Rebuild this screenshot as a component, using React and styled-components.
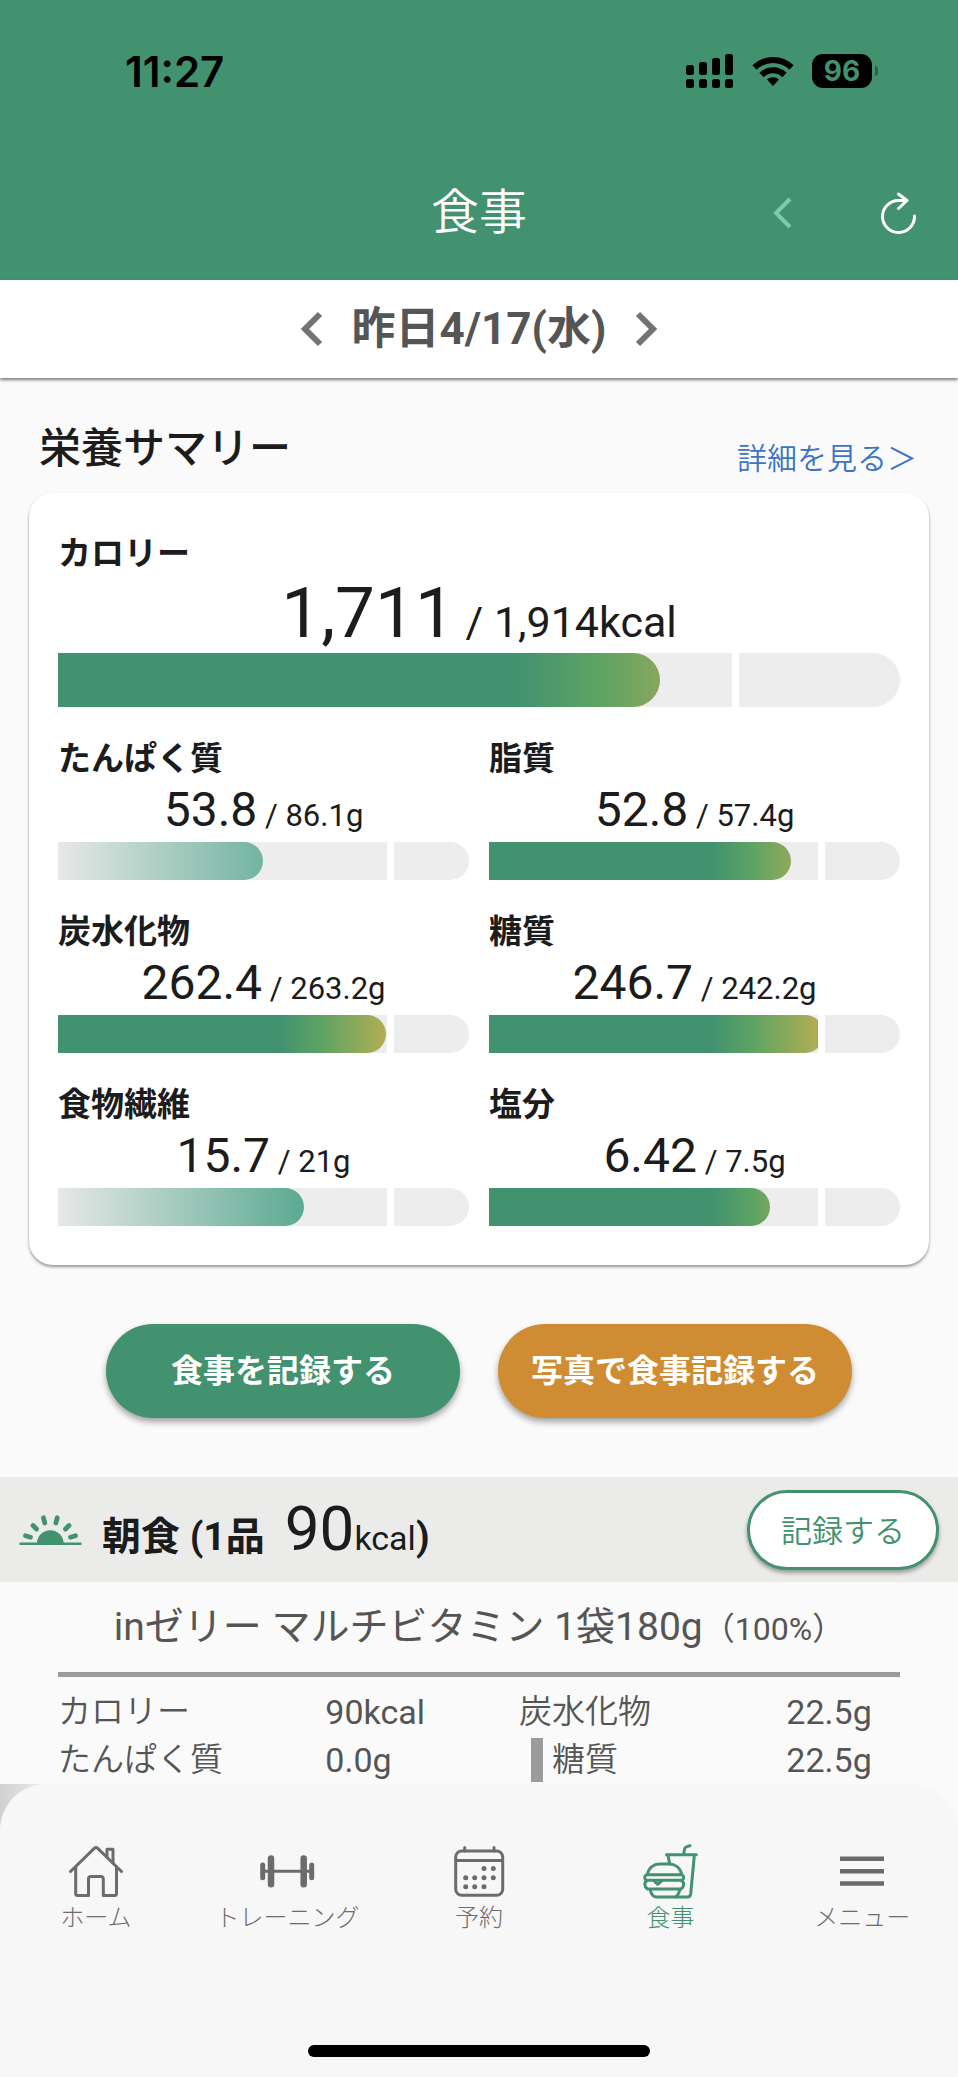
import React from "react"
import styled, { createGlobalStyle } from "styled-components"

const GREEN = "#42926f"
const INK = "#1c1c1c"

const nutrients = [
  { name: "たんぱく質", value: 53.8, goal: 86.1 },
  { name: "脂質", value: 52.8, goal: 57.4 },
  { name: "炭水化物", value: 262.4, goal: 263.2 },
  { name: "糖質", value: 246.7, goal: 242.2 },
  { name: "食物繊維", value: 15.7, goal: 21 },
  { name: "塩分", value: 6.42, goal: 7.5 },
]

const tabs = [
  { label: "ホーム", icon: HomeIcon },
  { label: "トレーニング", icon: DumbbellIcon },
  { label: "予約", icon: CalendarIcon },
  { label: "食事", icon: MealIcon, active: true },
  { label: "メニュー", icon: MenuIcon },
]

function Meter({ name, value, goal, large }) {
  const percent = (value / goal) * 100
  return (
    <Track
      $large={large}
      role="meter"
      aria-label={name}
      aria-valuemin={0}
      aria-valuemax={goal}
      aria-valuenow={value}
    >
      <Goal>
        <Fill $low={percent < 80} style={{ width: `${percent}%` }} />
      </Goal>
      <Over />
    </Track>
  )
}

function App() {
  return (
    <Page>
      <GlobalStyle />
      <Header>
        <StatusBar>
          <Clock>11:27</Clock>
          <StatusIcons>
            <SignalIcon />
            <WifiIcon />
            <Battery>96</Battery>
          </StatusIcons>
        </StatusBar>
        <AppBar>
          <AppTitle>食事</AppTitle>
          <AppActions>
            <IconButton aria-label="戻る">
              <svg width="20" height="34" viewBox="0 0 20 34" fill="none">
                <path d="M17 3L3 17l14 14" stroke="#7bcaa8" strokeWidth="4" />
              </svg>
            </IconButton>
            <IconButton aria-label="更新">
              <RefreshIcon />
            </IconButton>
          </AppActions>
        </AppBar>
      </Header>

      <DateBar>
        <IconButton aria-label="前の日">
          <svg width="24" height="38" viewBox="0 0 24 38" fill="none">
            <path d="M20 4L5 19l15 15" stroke="#737373" strokeWidth="6" />
          </svg>
        </IconButton>
        <DateText>昨日4/17(水)</DateText>
        <IconButton aria-label="次の日">
          <svg width="24" height="38" viewBox="0 0 24 38" fill="none">
            <path d="M4 4l15 15L4 34" stroke="#737373" strokeWidth="6" />
          </svg>
        </IconButton>
      </DateBar>

      <main>
        <SectionHead>
          <SectionTitle>栄養サマリー</SectionTitle>
          <DetailLink href="#detail">詳細を見る＞</DetailLink>
        </SectionHead>

        <Card>
          <Label>カロリー</Label>
          <Amount $large>
            1,711<Target $large> / 1,914kcal</Target>
          </Amount>
          <Meter name="カロリー" value={1711} goal={1914} large />
          <NutrientGrid>
            {nutrients.map(n => (
              <div key={n.name}>
                <Label>{n.name}</Label>
                <Amount>
                  {n.value}
                  <Target> / {n.goal}g</Target>
                </Amount>
                <Meter {...n} />
              </div>
            ))}
          </NutrientGrid>
        </Card>

        <Actions>
          <ActionButton $color={GREEN}>食事を記録する</ActionButton>
          <ActionButton $color="#cf8c33">写真で食事記録する</ActionButton>
        </Actions>

        <MealHead>
          <SunriseIcon />
          <MealTitle>
            朝食 (1品<MealKcal>90</MealKcal>
            <MealUnit>kcal</MealUnit>)
          </MealTitle>
          <RecordButton>記録する</RecordButton>
        </MealHead>

        <Food>
          <FoodName>
            inゼリー マルチビタミン 1袋180g<Portion>（100%）</Portion>
          </FoodName>
          <FoodTable>
            <tbody>
              <tr>
                <NameCell>カロリー</NameCell>
                <ValueCell $wide>90kcal</ValueCell>
                <NameCell>炭水化物</NameCell>
                <ValueCell>22.5g</ValueCell>
              </tr>
              <tr>
                <NameCell>たんぱく質</NameCell>
                <ValueCell $wide>0.0g</ValueCell>
                <NameCell>
                  <SubName>糖質</SubName>
                </NameCell>
                <ValueCell>22.5g</ValueCell>
              </tr>
            </tbody>
          </FoodTable>
        </Food>
      </main>

      <TabBack>
        <TabBar>
          <Tabs>
            {tabs.map(({ label, icon: Icon, active }) => (
              <Tab
                key={label}
                href={`#${label}`}
                $active={active}
                aria-current={active ? "page" : undefined}
              >
                <Icon />
                <span>{label}</span>
              </Tab>
            ))}
          </Tabs>
          <HomeIndicator />
        </TabBar>
      </TabBack>
    </Page>
  )
}

export default App

function SignalIcon() {
  const bars = [
    { x: 0, y: 11, h: 10 },
    { x: 13, y: 8, h: 13 },
    { x: 26, y: 4, h: 17 },
    { x: 39, y: 0, h: 21 },
  ]
  return (
    <svg width="48" height="34" viewBox="0 0 48 34">
      {bars.map(b => (
        <g key={b.x}>
          <rect x={b.x} y={b.y} width="8" height={b.h} rx="2.500" />
          <rect x={b.x} y="25" width="8" height="9" rx="2.500" />
        </g>
      ))}
    </svg>
  )
}

function WifiIcon() {
  return (
    <svg width="42" height="30" viewBox="0 0 42 30">
      <g fill="none" stroke="#000" strokeWidth="6">
        <path d="M2.500 11.500a26.500 26.500 0 0 1 37 0" />
        <path d="M9.500 19a16.500 16.500 0 0 1 23 0" />
      </g>
      <path d="M21 30l-6-6.500a9 9 0 0 1 12 0z" />
    </svg>
  )
}

function RefreshIcon() {
  return (
    <svg width="36" height="42" viewBox="0 0 36 42" fill="none">
      <g stroke="#fff" strokeWidth="3" strokeLinecap="round">
        <path d="M33.500 24A16 16 0 1 1 17.500 8.500H25.500" />
        <path d="M17.500 2l8.500 6.500-8.500 8" strokeLinejoin="round" />
      </g>
    </svg>
  )
}

function SunriseIcon() {
  return (
    <svg width="66" height="34" viewBox="0 0 66 34">
      <path d="M19 30.500a13.300 13.300 0 0 1 26.600 0z" fill={GREEN} />
      <g stroke={GREEN} strokeLinecap="round">
        <path d="M2.500 30.700H62.500" strokeWidth="2.500" />
        <path
          d="M7.500 22.800l5 1.400M15 12.500l3.500 3.500M25.500 4.800l1.300 5.200M39.200 4.800L37.900 10M51 12.500l-3.500 3.500M57.500 22.800l-5 1.400"
          strokeWidth="4.800"
        />
      </g>
    </svg>
  )
}

function TabIcon({ children }) {
  return (
    <svg
      width="56"
      height="56"
      viewBox="0 0 56 56"
      fill="none"
      stroke="currentColor"
      strokeWidth="3"
      strokeLinecap="round"
      strokeLinejoin="round"
    >
      {children}
    </svg>
  )
}

function HomeIcon() {
  return (
    <TabIcon>
      <path d="M2.500 28.500L26.500 5.200a2 2 0 0 1 3 0L53.500 28.500" />
      <path d="M7.700 24.500V50.500a2 2 0 0 0 2 2H20.500V36a2.500 2.500 0 0 1 2.500-2.500H32.800a2.500 2.500 0 0 1 2.500 2.500V52.500H46.500a2 2 0 0 0 2-2V24.500" />
      <path d="M39 13.500V6.200H45V20" />
    </TabIcon>
  )
}

function DumbbellIcon() {
  return (
    <TabIcon>
      <path d="M4 28.300H52" />
      <path d="M3.700 22V34.700M52.700 22V34.700" strokeWidth="5" />
      <path d="M12 15.500V41.300M44.700 15.500V41.300" strokeWidth="6.500" />
    </TabIcon>
  )
}

function CalendarIcon() {
  return (
    <TabIcon>
      <rect x="4.700" y="8" width="47" height="44.300" rx="6" />
      <path d="M5 17.500H51.500M13.700 4.500V8M43 4.500V8" />
      <path
        d="M33 25.500h0M42.300 25.500h0M14.700 34.700h0M23.700 34.700h0M33 34.700h0M42.300 34.700h0M14.700 43.700h0M23.700 43.700h0M33 43.700h0"
        strokeWidth="5"
      />
    </TabIcon>
  )
}

function MealIcon() {
  return (
    <TabIcon>
      <path d="M47 2.700L43.800 3.600a3 3 0 0 0-2.200 2.200L40.700 11" />
      <path d="M23.500 11.700H53.300" />
      <path d="M25 12.500L26.500 20M51.300 12.500L47.700 51a3.500 3.500 0 0 1-3.500 3H13.500C9.500 54 8 50.500 7.200 46.500" />
      <path d="M4.500 31.500C5.500 24.500 11 21 16.500 21H26C32 21 37.200 24.500 38.700 31.500" />
      <rect x="1.700" y="31.800" width="39" height="5.500" rx="2.700" />
      <path d="M4 37.500C1 39.500 1 43.500 4.500 46H38C41.500 43.500 41.500 39.500 38.500 37.500" />
      <path d="M10.500 37.500l4.300 3.800 4.300-3.800M36.800 46.500C36 50.500 35 52.500 32.500 54" />
    </TabIcon>
  )
}

function MenuIcon() {
  return (
    <TabIcon>
      <path
        d="M6 15.800H50M6 28.300H50M6 40.500H50"
        strokeWidth="4.500"
        strokeLinecap="butt"
      />
    </TabIcon>
  )
}

const GlobalStyle = createGlobalStyle`
  body {
    margin: 0;
    background: #fafafa;
    color: ${INK};
    font-family: Roboto, "Noto Sans CJK JP", sans-serif;
  }
  * {
    box-sizing: border-box;
  }
  svg {
    display: block;
    flex-shrink: 0;
  }
  button {
    border: 0;
    padding: 0;
    font-family: inherit;
    cursor: pointer;
  }
  a {
    text-decoration: none;
  }
`
const Page = styled.div`
  display: flex;
  flex-direction: column;
  min-height: 100vh;
`
const Header = styled.header`
  background: ${GREEN};
`
const StatusBar = styled.div`
  display: flex;
  align-items: center;
  justify-content: space-between;
  height: 142px;
  padding: 0 86px 0 125px;
`
const Clock = styled.span`
  color: #000;
  font-family: Inter, sans-serif;
  font-size: 42px;
  font-weight: 600;
`
const StatusIcons = styled.div`
  display: flex;
  align-items: center;
  gap: 18px;
`
const Battery = styled.span`
  position: relative;
  width: 60px;
  border-radius: 11px;
  background: #000;
  color: ${GREEN};
  font-family: Inter, sans-serif;
  font-size: 28px;
  font-weight: 700;
  line-height: 34px;
  text-align: center;

  &::after {
    content: "";
    position: absolute;
    top: 12px;
    right: -6px;
    width: 3px;
    height: 10px;
    border-radius: 0 3px 3px 0;
    background: #2b6249;
  }
`
const AppBar = styled.div`
  display: grid;
  grid-template-columns: 1fr auto 1fr;
  align-items: center;
  height: 138px;
  padding: 4px 41px 0;
`
const AppTitle = styled.h1`
  grid-column: 2;
  margin: 0;
  color: #fff;
  font-size: 48px;
  font-weight: 350;
  line-height: 60px;
`
const AppActions = styled.div`
  display: flex;
  align-items: center;
  justify-content: flex-end;
  gap: 88px;
`
const IconButton = styled.button`
  background: none;
`
const DateBar = styled.div`
  position: relative;
  display: flex;
  align-items: center;
  justify-content: center;
  gap: 28px;
  height: 98px;
  background: #fff;
  box-shadow: 0 2px 3px rgba(0, 0, 0, 0.5);
`
const DateText = styled.time`
  color: #555;
  font-size: 44px;
  font-weight: 700;
  line-height: 60px;
`
const SectionHead = styled.div`
  display: flex;
  align-items: flex-end;
  justify-content: space-between;
  padding: 44px 41px 17px 39px;
`
const SectionTitle = styled.h2`
  margin: 0;
  font-size: 42px;
  font-weight: 500;
  line-height: 54px;
`
const DetailLink = styled.a`
  color: #3a74c4;
  font-size: 30px;
  font-weight: 350;
  line-height: 34px;
`
const Card = styled.section`
  margin: 0 29px;
  padding: 39px 29px;
  border-radius: 24px;
  background: #fff;
  box-shadow: 0 2px 3px rgba(0, 0, 0, 0.4);
`
const Label = styled.h3`
  margin: 0;
  font-size: 33px;
  font-weight: 700;
  line-height: 44px;
`
const Amount = styled.p`
  margin: 0 0 3px;
  font-size: ${p => (p.$large ? 71 : 48)}px;
  line-height: ${p => (p.$large ? 74 : 58)}px;
  text-align: center;
`
const Target = styled.span`
  font-size: ${p => (p.$large ? 43 : 31)}px;
  line-height: 1;
`
const Track = styled.div`
  display: flex;
  gap: 7px;
  height: ${p => (p.$large ? 54 : 38)}px;
`
const Goal = styled.div`
  width: 80%;
  overflow: hidden;
  background: #ededed;
  container-type: inline-size;
`
/* the gradient spans the whole goal, the fill only uncovers part of it */
const Fill = styled.div`
  height: 100%;
  border-radius: 0 27px 27px 0;
  background-image: ${p =>
    p.$low
      ? "linear-gradient(90deg, #e8e8e8, #2b9575)"
      : `linear-gradient(90deg, ${GREEN} 68%, #5da364 80%, #b2ae53)`};
  background-size: 100cqw 100%;
`
const Over = styled.div`
  flex: 1;
  border-radius: 0 27px 27px 0;
  background: #ededed;
`
const NutrientGrid = styled.div`
  display: grid;
  grid-template-columns: 1fr 1fr;
  gap: 30px 20px;
  margin-top: 30px;
`
const Actions = styled.div`
  display: flex;
  gap: 38px;
  padding: 59px 106px;
`
const ActionButton = styled.button`
  flex: 1;
  height: 94px;
  padding-bottom: 6px;
  border-radius: 47px;
  background: ${p => p.$color};
  color: #fff;
  font-size: 32px;
  font-weight: 700;
  box-shadow: 0 4px 6px rgba(0, 0, 0, 0.35);
`
const MealHead = styled.div`
  display: flex;
  align-items: center;
  gap: 18px;
  height: 105px;
  padding: 0 19px 0 18px;
  background: #ebebea;
`
const MealTitle = styled.h2`
  flex: 1;
  margin: 0;
  padding-top: 6px;
  font-size: 39px;
  font-weight: 700;
  line-height: 60px;
`
const MealKcal = styled.span`
  margin-left: 20px;
  font-size: 62px;
  font-weight: 400;
  line-height: 1;
`
const MealUnit = styled.span`
  font-size: 34px;
  font-weight: 400;
`
const RecordButton = styled.button`
  width: 192px;
  height: 80px;
  padding-bottom: 2px;
  border: 3px solid ${GREEN};
  border-radius: 40px;
  background: #fff;
  color: ${GREEN};
  font-size: 31px;
  font-weight: 350;
  box-shadow: 0 3px 4px rgba(0, 0, 0, 0.35);
`
const Food = styled.article`
  padding: 0 58px;
  color: #555;
`
const FoodName = styled.h3`
  margin: 0;
  padding: 20px 0;
  border-bottom: 5px solid #9b9b9b;
  font-size: 39px;
  font-weight: 400;
  line-height: 50px;
  text-align: center;
`
const Portion = styled.span`
  font-size: 32px;
  line-height: 1;
`
const FoodTable = styled.table`
  width: 100%;
  margin-top: 11px;
  border-spacing: 0;
  table-layout: fixed;
`
const NameCell = styled.th`
  padding: 0;
  font-size: 33px;
  font-weight: 350;
  line-height: 48px;
  text-align: left;
  vertical-align: middle;
`
const ValueCell = styled.td`
  width: ${p => (p.$wide ? "23%" : "13.5%")};
  padding: 0;
  font-size: 34px;
  line-height: 48px;
  vertical-align: middle;
`
const SubName = styled.span`
  display: block;
  margin-left: 12px;
  padding-left: 9px;
  border-left: 12px solid #9b9b9b;
  line-height: 44px;
`
const TabBack = styled.div`
  margin-top: auto;
  background: linear-gradient(90deg, #d0d0d0, #fafafa 64px);
`
const TabBar = styled.nav`
  padding: 59px 0 20px;
  border-radius: 46px 46px 0 0;
  background: #f7f7f7;
`
const Tabs = styled.div`
  display: grid;
  grid-template-columns: repeat(5, 1fr);
`
const Tab = styled.a`
  display: flex;
  flex-direction: column;
  align-items: center;
  gap: 3px;
  color: ${p => (p.$active ? GREEN : "#6c6c6c")};
  font-size: 24px;
  font-weight: 300;
  line-height: 32px;
`
const HomeIndicator = styled.div`
  width: 342px;
  max-width: 60%;
  height: 12px;
  margin: 111px auto 0;
  border-radius: 6px;
  background: #000;
`
